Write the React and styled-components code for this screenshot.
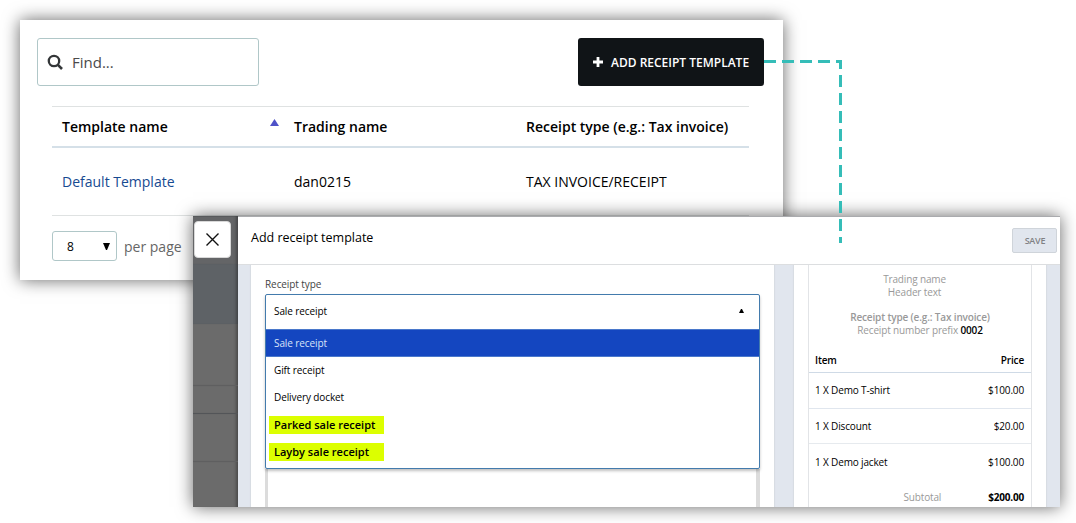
import React from "react";
import styled, { createGlobalStyle } from "styled-components";

const Global = createGlobalStyle`
  * { box-sizing: border-box; }
  body { margin: 0; background: #fff; overflow: hidden; font-family: "Open Sans", "Noto Sans", sans-serif; color: #000; }
`;

const Stage = styled.main`
  position: relative;
  width: 1076px;
  height: 523px;
  overflow: hidden;
  background: #fff;
`;

const Window = styled.section`
  position: absolute;
  left: ${(p) => p.$x}px;
  top: ${(p) => p.$y}px;
  width: ${(p) => p.$w}px;
  height: ${(p) => p.$h}px;
  background: #fff;
  box-shadow: 0 0 16px rgba(0, 0, 0, 0.6);
`;

/* Template list */
const Toolbar = styled.div`
  display: flex;
  justify-content: space-between;
  padding: 18px 19px 0 17px;
`;

const SearchBox = styled.div`
  display: flex;
  align-items: center;
  gap: 9px;
  width: 222px;
  height: 48px;
  padding-left: 9px;
  border: 1px solid #b0c7c8;
  border-radius: 3px;
  font-size: 15px;
  color: #4a4a4a;
`;

const AddButton = styled.button`
  display: flex;
  align-items: center;
  gap: 8px;
  width: 186px;
  height: 48px;
  padding: 0 0 0 15px;
  border: 0;
  border-radius: 3px;
  background: #101417;
  color: #fff;
  font: 600 12px "Open Sans", sans-serif;
  white-space: nowrap;
`;

const Table = styled.div`
  margin: 20px 34px 0 32px;
  border-top: 1px solid #dfe2e2;
`;

const TableRow = styled.div`
  display: grid;
  grid-template-columns: 232px 232px 1fr;
  align-items: center;
  height: ${(p) => (p.$head ? 41 : 68)}px;
  border-bottom: ${(p) => (p.$head ? "2px solid #d5e0e8" : "1px solid #dfe2e2")};
  font-size: 14px;
  font-weight: ${(p) => (p.$head ? 600 : 400)};
`;

const Cell = styled.div`
  display: flex;
  justify-content: space-between;
  padding: 0 5px 0 10px;
  white-space: nowrap;
  color: ${(p) => (p.$link ? "#174a91" : "#000")};
`;

const SortIcon = styled.svg`
  margin-top: 2px;
`;

const Pager = styled.div`
  display: flex;
  align-items: center;
  gap: 7px;
  padding: 15px 0 0 32px;
  color: #666;
  font-size: 14px;
`;

const PageSize = styled.div`
  display: flex;
  align-items: center;
  justify-content: space-between;
  width: 65px;
  height: 30px;
  padding: 0 6px 0 14px;
  border: 1px solid #b0c7c8;
  border-radius: 3px;
  color: #000;
  font-size: 12px;
`;

/* Template editor */
const Editor = styled.div`
  display: flex;
  height: 100%;
  overflow: hidden;
`;

const Backdrop = styled.div`
  display: flex;
  flex-direction: column;
  width: 45px;
  flex: none;
  background: #6b6b6b;
  box-shadow: inset 0 1px 0 #58595a;
`;

const BackdropBand = styled.div`
  height: ${(p) => p.$h}px;
  flex: ${(p) => (p.$rest ? "1" : "none")};
  background: ${(p) => p.$fill || "transparent"};
  border-bottom: ${(p) => (p.$line ? `1px solid ${p.$line}` : "0")};
  padding: ${(p) => p.$pad || "0"};
  box-shadow: inset -4px 0 3px -2px rgba(0, 0, 0, 0.3);
`;

const CloseButton = styled.button`
  display: flex;
  align-items: center;
  justify-content: center;
  width: 37px;
  height: 37px;
  padding: 0;
  border: 1px solid #d8d8d8;
  border-radius: 4px;
  background: #fff;
`;

const Main = styled.div`
  flex: 1;
  display: flex;
  flex-direction: column;
  background: #fff;
`;

const Header = styled.header`
  display: flex;
  align-items: flex-start;
  justify-content: space-between;
  height: 49px;
  flex: none;
  padding: 0 3px 0 13px;
  border-top: 1px solid #aaabae;
  border-bottom: 1px solid #dcdee0;
`;

const Title = styled.h1`
  margin: 12px 0 0;
  font-size: 12.5px;
  line-height: 18px;
  font-weight: 400;
`;

const SaveButton = styled.button`
  margin-top: 11px;
  width: 45px;
  height: 25px;
  padding: 0 0 0 1px;
  border: 1px solid #cfd4da;
  border-radius: 2px;
  background: #e1e6ee;
  color: #808184;
  font: 600 9px "Open Sans", sans-serif;
  letter-spacing: -0.2px;
`;

const Body = styled.div`
  display: flex;
  flex: 1;
  gap: 20px;
  padding: 0 14px 0 13px;
  background: #e1e6ee;
`;

const Card = styled.div`
  width: ${(p) => p.$w}px;
  padding: 0 14px;
  background: #fff;
  box-shadow: 0 0 1px 1px #d8dde3;
  clip-path: inset(0 -2px);
`;

const Label = styled.div`
  padding-top: 12px;
  height: 29px;
  font-size: 10px;
  letter-spacing: -0.08px;
  line-height: 14px;
  color: #444;
`;

const Dropdown = styled.div`
  height: 175px;
  border: 1px solid #437bad;
  border-radius: 2px;
  box-shadow: 0 2px 3px rgba(0, 0, 0, 0.25);
  font-size: 10px;
  letter-spacing: -0.1px;
  background: #fff;
  position: relative;
`;

const Selected = styled.div`
  display: flex;
  align-items: center;
  justify-content: space-between;
  height: 34px;
  padding: 0 15px 2px 8px;
`;

const Option = styled.div`
  display: flex;
  align-items: center;
  height: 27px;
  padding: ${(p) => (p.$marked ? "2px 0 0 3px" : "0 0 0 8px")};
  background: ${(p) => (p.$active ? "#1446c0" : "transparent")};
  box-shadow: ${(p) => (p.$active ? "inset 0 1px 0 #4a78cb, 0 1px 0 #4a78cb" : "none")};
  color: ${(p) => (p.$active ? "#d9e3f8" : "#000")};
`;

const Mark = styled.span`
  width: 115px;
  height: 18px;
  padding-left: 5px;
  line-height: 18px;
  background: #dcff00;
  font-size: 11px;
  letter-spacing: 0;
  font-weight: 600;
  white-space: nowrap;
`;

const TextArea = styled.div`
  height: 38px;
  border: solid #dcdcdc;
  border-width: 0 4px 0 3px;
`;

const Receipt = styled.div`
  height: 242px;
  width: 224px;
  border: solid #e2e4e7;
  border-width: 0 1px;
  font-size: 10px;
  letter-spacing: -0.15px;
  line-height: 13px;
  color: #000;
`;

const Heading = styled.div`
  padding-top: 8px;
  height: 82px;
  text-align: center;
  color: #999;
  white-space: nowrap;
`;

const HeadingLine = styled.div`
  margin-top: ${(p) => (p.$gap ? 12 : 0)}px;
  font-weight: ${(p) => (p.$strong ? 600 : 400)};
  padding-right: ${(p) => p.$shift || 0}px;
`;

const Dark = styled.span`
  color: #000;
  font-weight: ${(p) => (p.$strong ? 600 : 400)};
`;

const Line = styled.div`
  display: flex;
  align-items: center;
  justify-content: space-between;
  height: ${(p) => p.$h}px;
  padding: ${(p) => (p.$strong ? "2px 7px 0 6px" : "0 7px 0 6px")};
  border-bottom: ${(p) => (p.$rule ? `1px solid ${p.$rule}` : "0")};
  font-weight: ${(p) => (p.$strong ? 600 : 400)};
`;

const Subtotal = styled.div`
  display: flex;
  justify-content: flex-end;
  gap: 47px;
  padding: 11px 7px 0;
  color: #999;
`;

const Total = styled.span`
  color: #000;
  font-weight: 700;
  letter-spacing: -0.2px;
`;

const Connector = styled.svg`
  position: absolute;
  left: 764px;
  top: 56px;
`;

export default function App() {
  return (
    <Stage>
      <Global />
      <Window $x={20} $y={20} $w={763} $h={260}>
        <Toolbar>
          <SearchBox>
            <svg width="16" height="16" viewBox="0 0 16 16" fill="none" stroke="#333638" strokeWidth="2.3">
              <circle cx="7" cy="7" r="5.2" />
              <path d="M10.7 10.7L15 15" strokeWidth="2.6" />
            </svg>
            Find...
          </SearchBox>
          <AddButton>
            <svg width="10" height="10" viewBox="0 0 10 10" stroke="#fff" strokeWidth="2.8">
              <path d="M5 0V10M0 5H10" />
            </svg>
            ADD RECEIPT TEMPLATE
          </AddButton>
        </Toolbar>
        <Table>
          <TableRow $head>
            <Cell>
              Template name
              <SortIcon width="9" height="7" viewBox="0 0 9 7">
                <path d="M4.5 0L9 7H0Z" fill="#4f52c8" />
              </SortIcon>
            </Cell>
            <Cell>Trading name</Cell>
            <Cell>Receipt type (e.g.: Tax invoice)</Cell>
          </TableRow>
          <TableRow>
            <Cell $link>Default Template</Cell>
            <Cell>dan0215</Cell>
            <Cell>TAX INVOICE/RECEIPT</Cell>
          </TableRow>
        </Table>
        <Pager>
          <PageSize>
            8
            <svg width="7" height="7" viewBox="0 0 7 7">
              <path d="M0 0H7L4 7H3Z" fill="#000" />
            </svg>
          </PageSize>
          per page
        </Pager>
      </Window>

      <Window $x={193} $y={216} $w={867} $h={291}>
        <Editor>
          <Backdrop>
            <BackdropBand $h={48} $fill="rgba(94, 96, 100, 0.45)" $pad="5px 0 0 1px">
              <CloseButton>
                <svg width="13" height="13" viewBox="0 0 13 13" fill="none" stroke="#111" strokeWidth="1.4">
                  <path d="M.5 .5L12.5 12.5M12.5 .5L.5 12.5" />
                </svg>
              </CloseButton>
            </BackdropBand>
            <BackdropBand $h={60} $fill="#5e6266" />
            <BackdropBand $h={62} $line="#5f5f60" />
            <BackdropBand $h={28} $line="#535558" />
            <BackdropBand $h={48} $line="#5f5f60" />
            <BackdropBand $rest />
          </Backdrop>
          <Main>
            <Header>
              <Title>Add receipt template</Title>
              <SaveButton>SAVE</SaveButton>
            </Header>
            <Body>
              <Card $w={523}>
                <Label>Receipt type</Label>
                <Dropdown>
                  <Selected>
                    Sale receipt
                    <svg width="5" height="4" viewBox="0 0 5 4">
                      <path d="M2 0H3L5 4H0Z" fill="#000" />
                    </svg>
                  </Selected>
                  <Option $active>Sale receipt</Option>
                  <Option>Gift receipt</Option>
                  <Option>Delivery docket</Option>
                  <Option $marked><Mark>Parked sale receipt</Mark></Option>
                  <Option $marked><Mark>Layby sale receipt</Mark></Option>
                </Dropdown>
                <TextArea />
              </Card>
              <Card $w={252}>
                <Receipt>
                  <Heading>
                    <HeadingLine $shift={11}>Trading name</HeadingLine>
                    <HeadingLine $shift={11}>Header text</HeadingLine>
                    <HeadingLine $gap $strong>Receipt type (e.g.: Tax invoice)</HeadingLine>
                    <HeadingLine>Receipt number prefix <Dark $strong>0002</Dark></HeadingLine>
                  </Heading>
                  <Line $h={26} $strong $rule="#cfdae6"><span>Item</span><span>Price</span></Line>
                  <Line $h={36} $rule="#e0e6ee"><span>1 X Demo T-shirt</span><span>$100.00</span></Line>
                  <Line $h={35} $rule="#e6eaee"><span>1 X Discount</span><span>$20.00</span></Line>
                  <Line $h={36}><span>1 X Demo jacket</span><span>$100.00</span></Line>
                  <Subtotal><span>Subtotal</span><Total>$200.00</Total></Subtotal>
                </Receipt>
              </Card>
            </Body>
          </Main>
        </Editor>
      </Window>

      <Connector width="80" height="190" fill="none" stroke="#35bdb8" strokeWidth="3">
        <path d="M0 5.5H76.5V187" strokeDasharray="12 6" />
      </Connector>
    </Stage>
  );
}
